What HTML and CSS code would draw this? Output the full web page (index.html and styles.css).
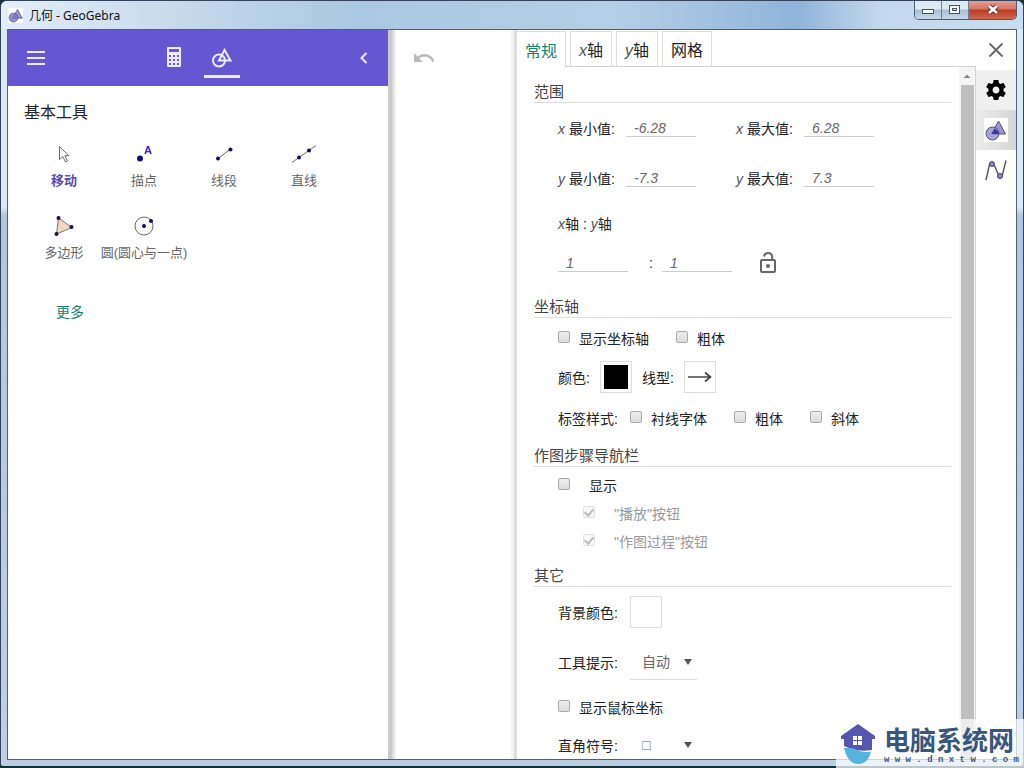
FILE: index.html
```html
<!DOCTYPE html>
<html lang="zh-CN">
<head>
<meta charset="utf-8">
<title>几何 - GeoGebra</title>
<link rel="stylesheet" href="styles.css">
</head>
<body>
<div class="window">
  <header class="titlebar">
    <svg class="app-icon" width="15" height="15" viewBox="0 0 22 22"><rect width="22" height="22" fill="#fff"/><path d="M14 2l7 13H6z" fill="#9a95dd" stroke="#555" /><circle cx="8" cy="14" r="6.5" fill="#7773cc" fill-opacity=".8" stroke="#557"/></svg>
    <h1 class="window-title">几何 - GeoGebra</h1>
    <div class="window-controls">
      <button class="control" aria-label="最小化"><svg width="14" height="12" viewBox="0 0 14 12"><rect x="1.500" y="5.500" width="11" height="4" fill="#fff" stroke="#445468"/></svg></button>
      <button class="control" aria-label="最大化"><svg width="14" height="12" viewBox="0 0 14 12"><rect x="1.500" y="1.500" width="10" height="8" fill="#fff" stroke="#445468"/><rect x="4.500" y="4.500" width="4" height="2" fill="#cfdcea" stroke="#445468"/></svg></button>
      <button class="control control-close" aria-label="关闭窗口"><svg width="14" height="12" viewBox="0 0 14 12"><path d="M3 2l8 7M11 2l-8 7" stroke="#6b3030" stroke-width="4.500"/><path d="M3 2l8 7M11 2l-8 7" stroke="#fff" stroke-width="2.600"/></svg></button>
    </div>
  </header>

  <main class="client">
    <section class="tools-panel">
      <nav class="toolbar">
        <button class="bar-button" aria-label="菜单"><svg width="20" height="20" viewBox="0 0 20 20"><path d="M1 4h18M1 10h18M1 16h18" stroke="#eeeafc" stroke-width="2"/></svg></button>
        <div class="views">
          <button class="bar-button view" aria-label="代数区"><svg width="20" height="22" viewBox="0 0 20 22"><path fill="#eeeafc" fill-rule="evenodd" d="M4 1h12q1 0 1 1v18q0 1-1 1H4q-1 0-1-1V2q0-1 1-1zM5 3v3h10V3zM5 9v2h2V9zM9 9v2h2V9zM13 9v2h2V9zM5 13v2h2v-2zM9 13v2h2v-2zM13 13v2h2v-2zM5 17v2h2v-2zM9 17v2h2v-2zM13 17v2h2v-2z"/></svg></button>
          <button class="bar-button view view-active" aria-label="工具"><svg width="22" height="22" viewBox="0 0 22 22" fill="none" stroke="#eeeafc" stroke-width="2"><circle cx="8" cy="14.500" r="6"/><path d="M13.500 4l6 10.500H8z"/></svg></button>
        </div>
        <button class="bar-button" aria-label="收起"><svg width="12" height="14" viewBox="0 0 12 14"><path d="M8.500 2L3.500 7l5 5" fill="none" stroke="#eeeafc" stroke-width="2"/></svg></button>
      </nav>
      <h2 class="tools-title">基本工具</h2>
      <div class="tools-grid">
        <button class="tool tool-active"><svg width="32" height="32" viewBox="0 0 32 32"><path d="M11.500 8.500v13l3.300-3 2.700 5.500 2-1-2.600-5.300h4z" fill="#fff" stroke="#666"/></svg><span>移动</span></button>
        <button class="tool"><svg width="32" height="32" viewBox="0 0 32 32"><circle cx="12" cy="20.500" r="3" fill="#120a80"/><text class="point-name" x="16" y="16">A</text></svg><span>描点</span></button>
        <button class="tool"><svg width="32" height="32" viewBox="0 0 32 32"><path d="M10 20.500l12-9" stroke="#666"/><circle cx="10" cy="20.500" r="2" fill="#150a60"/><circle cx="22.500" cy="11.500" r="2" fill="#150a60"/></svg><span>线段</span></button>
        <button class="tool"><svg width="32" height="32" viewBox="0 0 32 32"><path d="M4 24.500L28 7.500" stroke="#666"/><circle cx="11" cy="19.500" r="2" fill="#150a60"/><circle cx="21" cy="12.500" r="2" fill="#150a60"/></svg><span>直线</span></button>
        <button class="tool"><svg width="32" height="32" viewBox="0 0 32 32"><path d="M10.500 8L24 17.500 8.500 24z" fill="#f3d6c4" stroke="#776"/><circle cx="10.500" cy="8" r="2" fill="#200a50"/><circle cx="23.500" cy="17" r="2" fill="#200a50"/><circle cx="8.500" cy="24" r="2" fill="#200a50"/></svg><span>多边形</span></button>
        <button class="tool"><svg width="32" height="32" viewBox="0 0 32 32"><circle cx="16" cy="16" r="9" fill="none" stroke="#666"/><circle cx="16" cy="16" r="2" fill="#150a60"/><circle cx="23" cy="11" r="2" fill="#150a60"/></svg><span>圆(圆心与一点)</span></button>
      </div>
      <button class="more">更多</button>
    </section>

    <section class="canvas" aria-label="绘图区">
      <button class="bar-button" aria-label="撤销"><svg width="24" height="24" viewBox="0 0 24 24"><path fill="#b9b9b9" d="M12.500 8c-2.650 0-5.050.990-6.900 2.600L2 7v9h9l-3.620-3.620c1.390-1.160 3.160-1.880 5.120-1.880 3.540 0 6.550 2.310 7.600 5.500l2.370-.780C21.080 11.030 17.150 8 12.500 8z"/></svg></button>
    </section>

    <aside class="settings">
      <div class="settings-main">
        <div class="tabs" role="tablist">
          <button class="tab tab-active" role="tab" aria-selected="true">常规</button>
          <button class="tab" role="tab"><i>x</i>轴</button>
          <button class="tab" role="tab"><i>y</i>轴</button>
          <button class="tab" role="tab">网格</button>
        </div>
        <div class="settings-view">
          <form class="form">
            <h3 class="heading">范围</h3>
            <div class="group group-range">
              <div class="row row-tall">
                <div class="pair"><label class="name" for="xmin"><i>x</i> 最小值:</label><input class="number" id="xmin" value="-6.28"></div>
                <div class="pair"><label class="name" for="xmax"><i>x</i> 最大值:</label><input class="number" id="xmax" value="6.28"></div>
              </div>
              <div class="row row-tall">
                <div class="pair"><label class="name" for="ymin"><i>y</i> 最小值:</label><input class="number" id="ymin" value="-7.3"></div>
                <div class="pair"><label class="name" for="ymax"><i>y</i> 最大值:</label><input class="number" id="ymax" value="7.3"></div>
              </div>
              <div class="row"><span><i>x</i>轴 : <i>y</i>轴</span></div>
              <div class="row">
                <input class="number" aria-label="x轴比例" value="1">
                <span class="ratio">:</span>
                <input class="number" aria-label="y轴比例" value="1">
                <button type="button" class="lock" aria-label="锁定比例"><svg width="24" height="24" viewBox="0 0 24 24" fill="none" stroke="#666" stroke-width="2"><rect x="5" y="9" width="14" height="12" rx="1"/><path d="M8 5.500q.500-3.500 4.200-3.500t4 4V9"/><circle cx="12" cy="15" r="1" fill="#666"/></svg></button>
              </div>
            </div>

            <h3 class="heading">坐标轴</h3>
            <div class="group group-axes">
              <div class="row options">
                <label class="option"><input type="checkbox" class="check">显示坐标轴</label>
                <label class="option"><input type="checkbox" class="check">粗体</label>
              </div>
              <div class="row row-swatches">
                <span>颜色:</span><button type="button" class="swatch" aria-label="颜色"><span class="ink"></span></button>
                <span>线型:</span><button type="button" class="swatch" aria-label="线型"><svg width="26" height="14" viewBox="0 0 26 14"><path d="M1 7h22M18 2.500L23.500 7 18 11.500" fill="none" stroke="#444" stroke-width="1.700"/></svg></button>
              </div>
              <div class="row">
                <span class="side-name">标签样式:</span>
                <div class="options">
                  <label class="option"><input type="checkbox" class="check">衬线字体</label>
                  <label class="option"><input type="checkbox" class="check">粗体</label>
                  <label class="option"><input type="checkbox" class="check">斜体</label>
                </div>
              </div>
            </div>

            <h3 class="heading">作图步骤导航栏</h3>
            <div class="group group-steps">
              <label class="row row-short option-wide"><input type="checkbox" class="check">显示</label>
              <label class="row row-short option-wide nested"><input type="checkbox" class="check" checked disabled>"播放"按钮</label>
              <label class="row row-short option-wide nested"><input type="checkbox" class="check" checked disabled>"作图过程"按钮</label>
            </div>

            <h3 class="heading">其它</h3>
            <div class="group">
              <div class="row row-tall"><span class="side-name">背景颜色:</span><button type="button" class="swatch" aria-label="背景颜色"></button></div>
              <div class="row row-tall"><label class="side-name" for="tips">工具提示:</label><span class="picker"><select id="tips"><option>自动</option></select></span></div>
              <div class="row"><label class="option"><input type="checkbox" class="check">显示鼠标坐标</label></div>
              <div class="row row-last"><label class="side-name" for="angle">直角符号:</label><span class="picker"><select id="angle"><option>□</option></select></span></div>
            </div>
          </form>
          <div class="scrollbar"><svg width="16" height="18" viewBox="0 0 16 18"><path d="M4.500 11L8 7.500l3.500 3.500z" fill="#888"/></svg><div class="thumb"></div></div>
        </div>
      </div>
      <nav class="rail">
        <button class="rail-button" aria-label="关闭"><svg width="20" height="20" viewBox="0 0 20 20"><path d="M3.500 3.500l13 13M16.500 3.500l-13 13" stroke="#666" stroke-width="1.800"/></svg></button>
        <button class="rail-button rail-gear" aria-label="设置"><svg width="24" height="24" viewBox="0 0 24 24"><path d="M19.430 12.980c.040-.320.070-.640.070-.980s-.030-.660-.070-.980l2.110-1.650c.190-.150.240-.420.120-.640l-2-3.460c-.120-.220-.390-.300-.610-.220l-2.490 1c-.520-.400-1.080-.730-1.690-.980l-.380-2.650C14.460 2.180 14.250 2 14 2h-4c-.250 0-.460.180-.490.420l-.380 2.650c-.610.250-1.170.590-1.690.980l-2.490-1c-.230-.090-.490 0-.610.220l-2 3.460c-.130.220-.070.490.120.640l2.110 1.650c-.040.320-.070.650-.070.980s.030.660.070.980l-2.110 1.650c-.190.150-.240.420-.120.640l2 3.460c.120.220.390.300.610.220l2.490-1c.520.400 1.080.730 1.690.980l.380 2.650c.030.240.240.420.490.420h4c.250 0 .460-.180.490-.420l.380-2.650c.610-.250 1.170-.590 1.690-.980l2.490 1c.230.090.490 0 .610-.220l2-3.460c.120-.220.070-.490-.120-.640l-2.110-1.650zM12 15.500c-1.930 0-3.500-1.570-3.500-3.500s1.570-3.500 3.500-3.500 3.500 1.570 3.500 3.500-1.570 3.500-3.500 3.500z"/></svg></button>
        <button class="rail-button rail-active" aria-label="绘图区"><svg width="24" height="24" viewBox="0 0 24 24"><rect width="24" height="24" fill="#fff"/><path d="M14.500 3l7 13h-14z" fill="#9994dd" stroke="#555"/><circle cx="8.500" cy="15.500" r="6.500" fill="#8f8bdc" fill-opacity=".8" stroke="#557"/><path d="M10.500 11L7.500 16h7.400q0-3-4.400-5z" fill="#39348c"/></svg></button>
        <button class="rail-button" aria-label="对象"><svg width="24" height="24" viewBox="0 0 24 24"><path d="M2 22L5.500 6.500Q7.500 2.500 10 6.500L14.500 17Q16.500 20.500 18.500 16.500L22 2.500" fill="none" stroke="#555" stroke-width="1.400"/><circle cx="8" cy="6" r="2.500" fill="#8c88d8" stroke="#445"/><circle cx="16" cy="18" r="2.500" fill="#8c88d8" stroke="#445"/></svg></button>
      </nav>
    </aside>
  </main>
</div>

<div class="watermark">
  <svg width="36" height="42" viewBox="0 0 36 42"><path d="M18 1L35 13v3h-3v11Q20 29 12 26T4 23v-7H1v-3z" fill="#5557ae"/><path d="M4 25q7-1 13 2t14 1.500Q28 41 18 41T4 25z" fill="#55b4df"/><path d="M13 13h4v4h-4zM18 13h4v4h-4zM13 18h4v4h-4zM18 18h4v4h-4z" fill="#fff"/></svg>
  <div class="watermark-text"><strong>电脑系统网</strong><small>w w w . d n x t w . c o m</small></div>
</div>
</body>
</html>
```
FILE: styles.css
```css
* { box-sizing: border-box; }

body {
  margin: 0;
  height: 100vh;
  overflow: hidden;
  background: #13333c;
  font-family: "Liberation Sans", "Noto Sans CJK SC", sans-serif;
  font-size: 14px;
  color: #222;
}

button {
  font: inherit;
  color: inherit;
  padding: 0;
  border: 0;
  background: none;
}

button svg { display: block; }
h1, h2, h3 { margin: 0; font-weight: normal; }

.window {
  height: 100%;
  display: flex;
  flex-direction: column;
  padding: 0 6px 6px;
  border: 1px solid #33435c;
  border-bottom: 2px solid #13333c;
  border-radius: 7px 7px 4px 4px;
  background: linear-gradient(#dbe9f6 0, #dbe9f6 27%, #b3c7dc 28%, #bccfe4 100%);
}

.titlebar {
  flex: none;
  height: 28px;
  margin: 0 -6px;
  padding: 0 6px;
  display: flex;
  align-items: center;
  border-radius: 6px 6px 0 0;
  background: linear-gradient(90deg, #e3eef8 0, #c5d8ea 18%, #a9c8e2 35%, #b4cfe8 60%, #8fb4da 78%, #c2d8ec 86%, #c9ddef 100%);
}

.app-icon { margin: 0 6px 0 1px; }
.window-title { flex: 1; font: 12px "Noto Sans", "Noto Sans CJK SC", sans-serif; color: #111; }

.window-controls {
  align-self: flex-start;
  display: flex;
  height: 19px;
  border: 1px solid #4a5b72;
  border-top: 0;
  border-radius: 0 0 5px 5px;
  overflow: hidden;
}

.control {
  width: 27px;
  display: grid;
  place-items: center;
  border-right: 1px solid #6c7f96;
  background: linear-gradient(#dce8f4 45%, #a9bed5 50%, #c5d8ea);
}

.control-close {
  width: 47px;
  border-right: 0;
  background: linear-gradient(#e5a093 0, #d57361 45%, #bc3a24 50%, #d0664c);
}

.client {
  flex: 1;
  min-height: 0;
  display: flex;
  border: 1px solid #4b6080;
  background: #fff;
}

.tools-panel {
  flex: none;
  width: 380px;
  position: relative;
  z-index: 1;
  background: #fff;
  box-shadow: 4px 0 #cacaca, 6px 0 #dcdcdc, 8px 0 #f2f2f2;
}

.toolbar {
  height: 56px;
  padding: 0 18px;
  display: flex;
  align-items: center;
  justify-content: space-between;
  background: #6557d2;
}

.views { display: flex; align-self: stretch; gap: 12px; margin-right: 8px; }
.view { width: 36px; margin: 8px 0; border-bottom: 3px solid transparent; }
.view-active { border-bottom-color: #eeeafc; }
.bar-button { display: grid; place-items: center; }

.tools-title { padding: 14px 16px 0; font-size: 16px; line-height: 26px; }

.tools-grid {
  display: grid;
  grid-template-columns: repeat(4, 80px);
  grid-auto-rows: 72px;
  padding: 12px 16px 0;
}

.tool {
  display: flex;
  flex-direction: column;
  align-items: center;
  align-self: start;
  font-size: 13px;
  line-height: 22px;
  color: #666;
  white-space: nowrap;
}

.tool-active { font-weight: bold; color: #5a4bb0; }
.point-name { font: bold 11px "Liberation Sans", sans-serif; fill: #3c22c8; }
.more { margin: 18px 48px; line-height: 24px; color: #128475; }

.canvas { flex: 1; display: flex; align-items: flex-start; padding: 16px 24px; }

.settings {
  flex: none;
  width: 499px;
  display: flex;
  position: relative;
  background: #fff;
  box-shadow: -3px 0 #dedede, -6px 0 #f3f3f3;
}

.settings-main {
  flex: 1;
  min-width: 0;
  display: flex;
  flex-direction: column;
}

.tabs {
  flex: none;
  display: flex;
  gap: 4px;
  height: 37px;
  padding-top: 1px;
  border-bottom: 1px solid #d0d0d0;
}

.tab {
  padding: 0 8px;
  border: 1px solid #ddd;
  border-bottom: 0;
  font-size: 16px;
}

.tab-active {
  margin-bottom: -1px;
  border-left: 0;
  background: #fff;
  color: #128475;
}

i { color: #555; }

.settings-view {
  flex: 1;
  min-height: 0;
  display: flex;
  border-right: 1px solid #d5d5d5;
}

.form { flex: 1; padding: 14px 8px 0 17px; overflow: hidden; }

.heading {
  height: 22px;
  border-bottom: 1px solid #ddd;
  font-size: 15px;
  line-height: 21px;
  color: #444;
}

.group { padding-left: 24px; }
.group-range { padding-bottom: 13px; }
.group-axes { padding-bottom: 5px; }
.group-steps { padding-top: 4px; padding-bottom: 10px; }

.row { height: 40px; display: flex; align-items: center; white-space: nowrap; }
.row-tall { height: 50px; }
.row-short { height: 28px; }
.row-last { height: 36px; }
.row-swatches { gap: 10px; height: 38px; }
.row-swatches + .row { height: 44px; }
.pair { width: 178px; display: flex; align-items: center; }
.name { width: 68px; }

.number {
  width: 70px;
  height: 18px;
  padding: 0 8px;
  border: 0;
  border-bottom: 1px solid #ccc;
  background: none;
  font: italic 14px "Liberation Sans", sans-serif;
  color: #666;
}

.ratio { width: 34px; padding-left: 21px; }
.lock { margin-left: 24px; }

.option { display: flex; align-items: center; gap: 9px; }
.options { display: flex; gap: 27px; }
.option-wide { gap: 19px; }
.nested { padding-left: 25px; color: #999; }

.check {
  appearance: none;
  width: 12px;
  height: 12px;
  margin: 0 0 3px;
  border: 1px solid #aaa;
  border-radius: 2px;
  background: linear-gradient(#eee, #ddd);
}

.check:disabled { border-color: #e2e2e2; background: #f8f8f8; }

.check:checked::after {
  content: "";
  display: block;
  width: 4px;
  height: 7px;
  margin: 0 auto;
  border: solid #bbb;
  border-width: 0 2px 2px 0;
  transform: rotate(40deg);
}

.swatch {
  width: 32px;
  height: 32px;
  display: grid;
  place-items: center;
  border: 1px solid #ddd;
}

.ink { width: 24px; height: 24px; background: #000; }
.side-name { width: 72px; }

.picker {
  width: 67px;
  display: flex;
  align-items: center;
  border-bottom: 1px solid #ddd;
}

.picker select {
  flex: 1;
  width: 0;
  height: 34px;
  padding: 0 0 0 12px;
  border: 0;
  appearance: none;
  background: none;
  font: inherit;
  color: #666;
}

.picker::after {
  content: "";
  width: 0;
  margin-right: 5px;
  border: 4px solid transparent;
  border-top: 6px solid #555;
  border-bottom: 0;
}

.scrollbar {
  width: 16px;
  padding: 0 1px;
  display: flex;
  flex-direction: column;
  align-items: center;
  background: #f5f5f5;
}

.thumb { width: 13px; flex: 1; background: #bfbfbf; }

.rail { width: 40px; display: flex; flex-direction: column; }
.rail-button { height: 40px; display: grid; place-items: center; }
.rail-gear { background: #efefef; }
.rail-active { background: linear-gradient(90deg, #ececec, #d6d6d6); }

.watermark {
  position: absolute;
  right: 0;
  bottom: 0;
  z-index: 2;
  display: flex;
  gap: 8px;
  padding: 4px 5px 3px 4px;
  background: rgba(255, 255, 255, .72);
}

.watermark-text { display: flex; flex-direction: column; color: #36577f; }
.watermark-text strong { font-size: 26px; line-height: 32px; font-family: "Noto Sans CJK SC", sans-serif; }
.watermark-text small { font: bold 9px/10px "Liberation Mono", monospace; }
```
